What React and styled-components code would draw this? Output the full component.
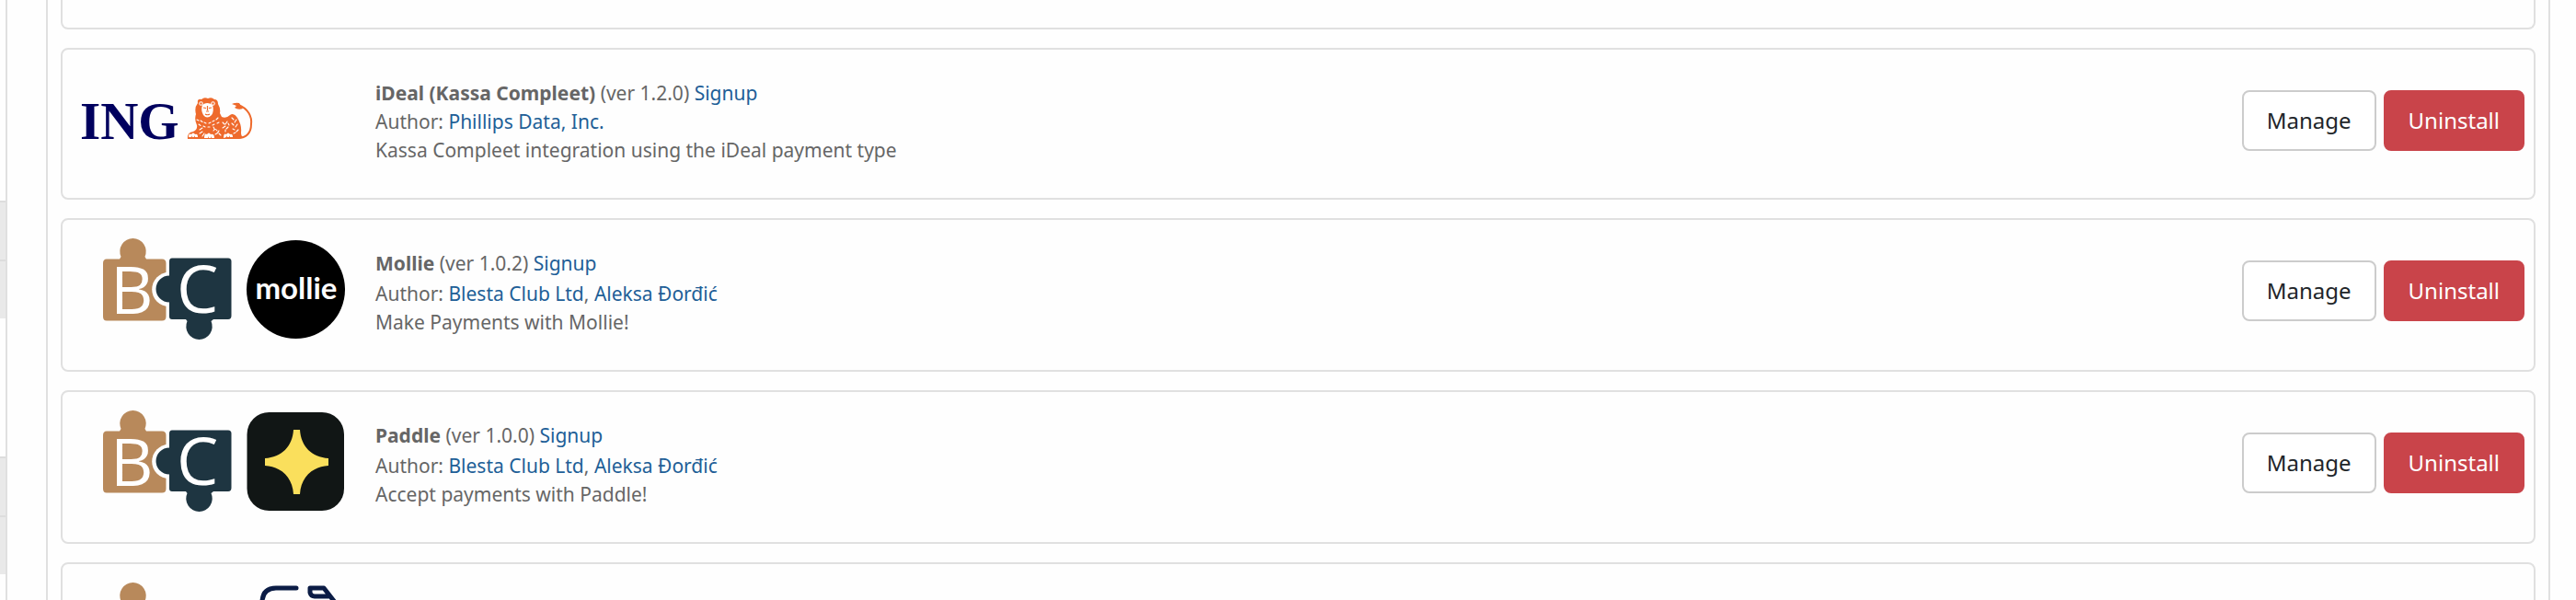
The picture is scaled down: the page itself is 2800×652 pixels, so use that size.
import styled, { createGlobalStyle } from 'styled-components';

const GlobalStyle = createGlobalStyle`
  * {
    box-sizing: border-box;
  }

  body {
    margin: 0;
    background-color: #fefefe;
    color: #666666;
    font-family: "Noto Sans", "Open Sans", sans-serif;
    font-size: 21px;
    line-height: 31px;
  }
`;

const Page = styled.div`
  display: flex;
  height: 100vh;
  overflow: hidden;
`;

const Sidebar = styled.nav`
  flex: none;
  width: 8px;
  border-right: 2px solid #e0e0e0;
  padding-top: 218px;
`;

const MenuGroup = styled.div`
  margin-bottom: 150px;
`;

const MenuItem = styled.div`
  height: 64px;
  border-top: 2px solid #dddddd;
  background-color: #e9e9e9;
`;

const Main = styled.main`
  flex: 1;
  padding: 0 28px 0 42px;
`;

const Panel = styled.section`
  display: flex;
  flex-direction: column;
  gap: 20px;
  padding: 0 14px;
  border: solid #e0e0e0;
  border-width: 0 2px;
`;

const Card = styled.article`
  display: flex;
  align-items: flex-start;
  padding: 20px 10px 20px 20px;
  border: 2px solid #e0e0e0;
  border-radius: 8px;
`;

const CardEnd = styled.div`
  height: 32px;
  border: 2px solid #e0e0e0;
  border-top: 0;
  border-radius: 0 0 8px 8px;
`;

const Logo = styled.svg`
  display: block;
  flex: none;
  width: 300px;
  height: 120px;
  margin-right: 20px;
`;

const Details = styled.div`
  flex: 1;
  padding: 12px 0 16px;
`;

const Line = styled.p`
  margin: 0;
  padding-top: ${({ $spaced }) => ($spaced ? '2px' : '0')};
`;

const Link = styled.a`
  color: #215f97;
  text-decoration: none;
`;

const Actions = styled.div`
  display: flex;
  gap: 8px;
  padding-top: 24px;
`;

const Button = styled.button`
  height: 66px;
  padding: 0 25px;
  border: 2px solid ${({ $danger }) => ($danger ? '#c9444a' : '#cccccc')};
  border-radius: 8px;
  background-color: ${({ $danger }) => ($danger ? '#c9444a' : '#ffffff')};
  color: ${({ $danger }) => ($danger ? '#ffffff' : '#212529')};
  font-family: inherit;
  font-size: 24px;
  line-height: 36px;
  cursor: pointer;
`;

const IngLogo = () => (
  <Logo viewBox="0 0 300 120" role="img" aria-label="ING">
    <text x="-1" y="77" fill="#00005e" fontFamily="'Liberation Serif', serif" fontWeight="700" fontSize="57">ING</text>
    <g fill="#ee6a2c">
      <path d="M116 77 Q115 70 122 69 Q127 67 126 62 Q123 56 125 50 Q123 43 127 38 Q126 33 131 34 Q134 31 138 33 Q142 31 145 34 Q149 34 149 39 Q152 44 151 49 L153 53 Q158 55 162 51 Q166 48 170 54 Q175 62 174 70 Q174 74 176 75 L172 77Z" />
      <path d="M164 39 Q168 37 172 38 Q174 41 176 44 Q171 46 167 43 L169 41Z" />
    </g>
    <path d="M171 40 C182 44 186 53 185 61 C185 71 179 76 171 76" fill="none" stroke="#ee6a2c" strokeWidth="2" />
    <g fill="#fff">
      <path d="M132 40 Q137 36 143 40 Q145 47 142 51 Q137 56 133 51 Q130 46 132 40Z" />
      <circle cx="130.5" cy="38.5" r="2.2" />
      <circle cx="143.5" cy="38.5" r="2.2" />
    </g>
    <g fill="none" stroke="#ee6a2c" strokeWidth="1.2">
      <path d="M133 43 l3 .5 M139 43.500 l3 -.5 M137.500 41 v5 M136 47 h3 M135 50 q2.500 1.500 5 0" />
      <circle cx="130.500" cy="38.500" r=".6" />
      <circle cx="143.500" cy="38.500" r=".6" />
    </g>
    <g fill="none" stroke="#fff" strokeWidth="1.1" strokeLinecap="round">
      <path d="M126 56 l2 1 M130 57 l2 1.500 M134 59 l2 1 M139 60 l2 -1 M143 58 l2 -1 M147 56 l2 -2" />
      <path d="M128 61 l2 1.500 M133 63 l2 1 M138 64 l2 0 M143 62 l2 -1 M148 60 l2 -1" />
      <path d="M129 67 l3 -2 M129 71 l3 -2 M132 74 l2 -3" />
      <path d="M144 68 q2 -3 4 0 M146 72 q3 -1 4 -4 M150 71 l2 2 M145 66 l-1 -2" />
      <path d="M154 59 l2 2 M159 58 l-2 3 M154 65 l3 -2 M158 66 l2 -2 M157 69 v-2 M161 62 l-1 -2" />
      <path d="M164 54 l2 2 M169 56 l-2 3 M164 60 l2 2 M170 61 l-2 3 M165 66 l2 1 M171 67 l-2 2 M166 71 l2 -1" />
    </g>
    <g fill="#fff">
      <path d="M117 75 q0 -5 3 -3 q2 -3 4 0 q3 -1 3 3 l-3 0 l0 -2 l-1 2 h-2 l0 -2 l-1 2Z" />
      <path d="M134 76 q0 -6 3 -4 q2 -3 4 0 q4 -1 4 4 l-3 0 l0 -2 l-1 2 h-2 l0 -2 l-1 2Z" />
      <path d="M155 76 q0 -6 3 -4 q2 -3 4 0 q3 -1 3 3 l-3 0 l0 -2 l-1 2 h-2 l0 -2 l-1 2Z" />
    </g>
  </Logo>
);

const PuzzlePieces = () => (
  <>
    <path d="M28 22.500 H42 L43.500 20 A14.200 14.200 0 1 1 69.500 20 L71 22.500 H88 Q92.500 22.500 92.500 27 V85 Q92.500 89.500 88 89.500 H28 Q24 89.500 24 85 V27 Q24 22.500 28 22.500Z" fill="#b8895b" />
    <circle cx="96" cy="55.500" r="18.800" fill="#fefefe" />
    <path d="M99 21.500 H160 Q163.500 21.500 163.500 25 V84 Q163.500 88 160 88 H144 L141.500 90 A14.200 14.200 0 1 1 115.500 90 L114 88 H99 Q96 88 96 85 V69.500 A14.500 14.500 0 0 1 96 40.500 V25 Q96 21.500 99 21.500Z" fill="#1e3541" />
  </>
);

const ClubLogo = () => (
  <>
    <PuzzlePieces />
    <g fill="#fff" fontFamily="'Open Sans', sans-serif" fontSize="72">
      <text x="32" y="82">B</text>
      <text x="104" y="81">C</text>
    </g>
  </>
);

const MollieLogo = () => (
  <Logo viewBox="0 0 300 120" role="img" aria-label="Blesta Club, Mollie">
    <ClubLogo />
    <circle cx="233.500" cy="55.500" r="53.500" fill="#000" />
    <text x="234" y="66" fill="#fff" textAnchor="middle" fontFamily="Lato, sans-serif" fontWeight="700" fontSize="33">mollie</text>
  </Logo>
);

const PaddleLogo = () => (
  <Logo viewBox="0 0 300 120" role="img" aria-label="Blesta Club, Paddle">
    <ClubLogo />
    <rect x="180.500" y="2" width="105.500" height="107" rx="24" fill="#111615" />
    <path d="M231 21 H238 C239 39 251 51 269 52 V60 C251 61 239 73 238 91 H231 C230 73 218 61 200 60 V52 C218 51 230 39 231 21Z" fill="#fadf5c" />
  </Logo>
);

const DocumentLogo = () => (
  <Logo viewBox="0 0 300 120" role="img" aria-label="Blesta Club">
    <PuzzlePieces />
    <path
      d="M234 6 H212 Q198 6 197 20 V92 Q197 105 210 105 H265 Q278 105 278 92 V24 L264 6 H249 V11 Q250 15 254 15 H270"
      fill="none"
      stroke="#0b1c45"
      strokeWidth="5"
      strokeLinecap="round"
      strokeLinejoin="round"
    />
  </Logo>
);

const clubAuthors = ['Blesta Club Ltd', 'Aleksa Đorđić'];

const gateways = [
  {
    name: 'iDeal (Kassa Compleet)',
    version: '1.2.0',
    authors: ['Phillips Data, Inc.'],
    description: 'Kassa Compleet integration using the iDeal payment type',
    Icon: IngLogo,
  },
  {
    name: 'Mollie',
    version: '1.0.2',
    authors: clubAuthors,
    description: 'Make Payments with Mollie!',
    Icon: MollieLogo,
  },
  {
    name: 'Paddle',
    version: '1.0.0',
    authors: clubAuthors,
    description: 'Accept payments with Paddle!',
    Icon: PaddleLogo,
  },
];

const Gateway = ({ name, version, authors, description, Icon }) => (
  <Card>
    <Icon />
    <Details>
      <Line>
        <strong>{name}</strong> (ver {version}) <Link href="#signup">Signup</Link>
      </Line>
      <Line $spaced={authors.length > 1}>
        Author:{' '}
        {authors.map((author, i) => (
          <span key={author}>
            {i > 0 && ', '}
            <Link href="#author">{author}</Link>
          </span>
        ))}
      </Line>
      <Line>{description}</Line>
    </Details>
    <Actions>
      <Button type="button">Manage</Button>
      <Button type="button" $danger>Uninstall</Button>
    </Actions>
  </Card>
);

const App = () => {
  return (
    <>
      <GlobalStyle />
      <Page>
        <Sidebar>
          <MenuGroup>
            <MenuItem />
            <MenuItem />
          </MenuGroup>
          <MenuGroup>
            <MenuItem />
            <MenuItem />
          </MenuGroup>
        </Sidebar>
        <Main>
          <Panel>
            <CardEnd />
            {gateways.map((gateway) => (
              <Gateway key={gateway.name} {...gateway} />
            ))}
            <Card>
              <DocumentLogo />
            </Card>
          </Panel>
        </Main>
      </Page>
    </>
  );
};

export default App;
